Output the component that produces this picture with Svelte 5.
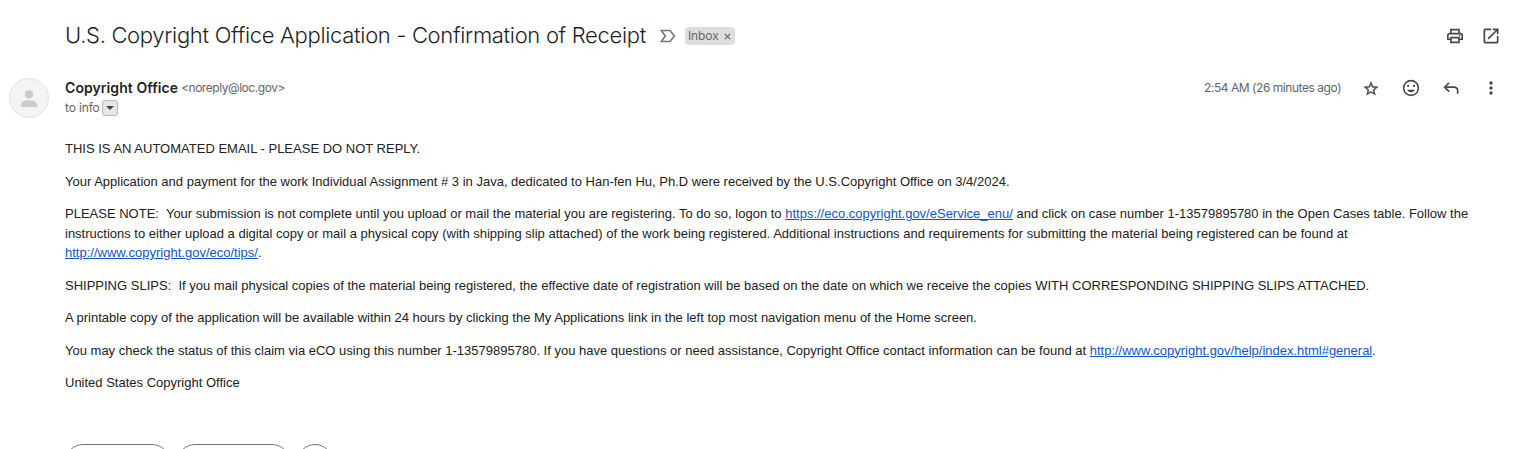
<script>
  const caseNumber = '1-13579895780';
</script>

<main class="message">
  <header class="subject">
    <h1>U.S. Copyright Office Application - Confirmation of Receipt</h1>
    <svg class="marker" viewBox="0 0 16 14" aria-hidden="true"><path d="M1.3 1.5H10L14.4 7 10 12.5H1.3L5.3 7Z" /></svg>
    <span class="label"><span class="label-name">Inbox</span><svg viewBox="0 0 8 8" aria-hidden="true"><path d="M1 1l6 6M7 1L1 7" /></svg></span>
    <div class="tools">
      <svg class="icon" viewBox="-0.5 -0.5 25 25"><path d="M19 8h-1V3H6v5H5c-1.660 0-3 1.340-3 3v6h4v4h12v-4h4v-6c0-1.660-1.340-3-3-3zM8 5h8v3H8V5zm8 12v2H8v-4h8v2zm2-2v-2H6v2H4v-4c0-.55.450-1 1-1h14c.55 0 1 .45 1 1v4h-2z" /><circle cx="18" cy="11.500" r="1" /></svg>
      <svg class="icon" viewBox="0 0 24 24"><path d="M19 19H5V5h7V3H5a2 2 0 0 0-2 2v14a2 2 0 0 0 2 2h14a2 2 0 0 0 2-2v-7h-2v7zM14 3v2h3.590l-9.830 9.830 1.410 1.410L19 6.410V10h2V3h-7z" /></svg>
    </div>
  </header>

  <section class="sender">
    <div class="avatar">
      <svg viewBox="0 0 16 18"><circle cx="8" cy="4.300" r="4.100" /><path d="M0 17v-2.500C0 11.700 4.500 10.300 8 10.300s8 1.400 8 4.200V17z" /></svg>
    </div>
    <div class="who">
      <div class="from"><strong>Copyright Office</strong><span class="address">&lt;noreply@loc.gov&gt;</span></div>
      <div class="to"><span>to info</span><i class="details"></i></div>
    </div>
    <span class="time">2:54 AM (26 minutes ago)</span>
    <div class="actions">
      <svg class="icon star" viewBox="-1.800 -2.800 27.600 27.600"><path d="M22 9.240l-7.190-.62L12 2 9.190 8.630 2 9.240l5.460 4.730L5.820 21 12 17.270 18.180 21l-1.630-7.030L22 9.240zM12 15.400l-3.760 2.270 1-4.280-3.320-2.880 4.380-.38L12 6.100l1.710 4.040 4.380.38-3.320 2.880 1 4.280L12 15.400z" /></svg>
      <svg class="icon" viewBox="0 0 24 24"><path d="M12 2.200a9.800 9.800 0 1 0 0 19.600 9.800 9.800 0 0 0 0-19.600zm0 17.700a7.900 7.900 0 1 1 0-15.800 7.900 7.900 0 0 1 0 15.800z" /><circle cx="8.500" cy="9.500" r="1.300" /><circle cx="15.500" cy="9.500" r="1.300" /><path d="M7.400 14h9.200c-.7 1.900-2.500 3-4.600 3S8.100 15.900 7.400 14z" /></svg>
      <svg class="icon" viewBox="0 -960 960 960"><path d="M760-200v-160q0-50-35-85t-85-35H273l144 144-57 56-240-240 240-240 57 56-144 144h367q83 0 141.500 58.500T840-360v160h-80Z" /></svg>
      <svg class="icon" viewBox="0 0 24 24"><circle cx="12" cy="6" r="2" /><circle cx="12" cy="12" r="2" /><circle cx="12" cy="18" r="2" /></svg>
    </div>
  </section>

  <article>
    <p>THIS IS AN AUTOMATED EMAIL - PLEASE DO NOT REPLY.</p>
    <p>Your Application and payment for the work Individual Assignment # 3 in Java, dedicated to Han-fen Hu, Ph.D were received by the U.S.Copyright Office on 3/4/2024.</p>
    <p>PLEASE NOTE:&nbsp; Your submission is not complete until you upload or mail the material you are registering. To do so, logon to <a href="https://eco.copyright.gov/eService_enu/">https://eco.copyright.gov/eService_enu/</a> and click on case number {caseNumber} in the Open Cases table. Follow the instructions to either upload a digital copy or mail a physical copy (with shipping slip attached) of the work being registered. Additional instructions and requirements for submitting the material being registered can be found at <a href="http://www.copyright.gov/eco/tips/">http://www.copyright.gov/eco/tips/</a>.</p>
    <p>SHIPPING SLIPS:&nbsp; If you mail physical copies of the material being registered, the effective date of registration will be based on the date on which we receive the copies WITH CORRESPONDING SHIPPING SLIPS ATTACHED.</p>
    <p>A printable copy of the application will be available within 24 hours by clicking the My Applications link in the left top most navigation menu of the Home screen.</p>
    <p>You may check the status of this claim via eCO using this number {caseNumber}. If you have questions or need assistance, Copyright Office contact information can be found at <a href="http://www.copyright.gov/help/index.html#general">http://www.copyright.gov/help/index.html#general</a>.</p>
    <p>United States Copyright Office</p>
  </article>

  <footer>
    <span class="pill reply"></span>
    <span class="pill forward"></span>
    <span class="pill react"></span>
  </footer>
</main>

<style>
  :global(body) { margin: 0; background: #fff; overflow: hidden; }
  .message {
    box-sizing: border-box;
    width: 1525px;
    height: 449px;
    overflow: hidden;
    display: flex;
    flex-direction: column;
    background: #fff;
    font-family: Inter, "Liberation Sans", sans-serif;
  }
  .subject {
    flex: none;
    height: 72px;
    padding: 0 24px 0 65px;
    display: flex;
    align-items: center;
  }
  h1 {
    margin: 0 0 2px;
    width: 595px;
    font-size: 22px;
    line-height: 28px;
    font-weight: 300;
    letter-spacing: -0.31px;
    color: #1f1f1f;
    white-space: nowrap;
  }
  .marker { width: 16px; height: 14px; fill: none; stroke: #757575; stroke-width: 1.6; }
  .label {
    box-sizing: border-box;
    display: flex;
    align-items: center;
    width: 50px;
    height: 18px;
    margin-left: 9px;
    padding-left: 3px;
    border-radius: 4px;
    background: #ddd;
    color: #666;
    font-size: 12px;
    line-height: 16px;
  }
  .label-name { width: 36px; letter-spacing: -0.1px; }
  .label svg { width: 7px; height: 7px; margin-top: 1px; fill: none; stroke: #666; stroke-width: 1.4; }
  .tools { margin-left: auto; display: flex; gap: 16px; }
  .icon { display: block; width: 20px; height: 20px; fill: #444746; }
  .star { stroke: #444746; stroke-width: 0.4; }
  .sender {
    flex: none;
    height: 67px;
    padding: 0 24px 0 9px;
    display: flex;
    align-items: flex-start;
  }
  .avatar {
    box-sizing: border-box;
    width: 40px;
    height: 40px;
    margin-top: 6px;
    border: 1px solid #e2e2e2;
    border-radius: 50%;
    background: #f4f4f4;
    display: flex;
    align-items: center;
    justify-content: center;
  }
  .avatar svg { width: 16px; height: 18px; fill: #ccc; margin-top: 1px; }
  .who { margin: 6px 0 0 16px; }
  .from { display: flex; height: 20px; line-height: 20px; white-space: nowrap; }
  strong { width: 116px; font-size: 14px; font-weight: 600; color: #1f1f1f; letter-spacing: 0.07px; }
  .address { font-size: 12px; color: #666; letter-spacing: -0.45px; }
  .to { display: flex; align-items: center; height: 20px; font-size: 12px; line-height: 20px; color: #666; }
  .to span { width: 37px; letter-spacing: -0.15px; white-space: nowrap; }
  .details {
    box-sizing: border-box;
    width: 16px;
    height: 16px;
    border: 1px solid #bbb;
    border-radius: 3px;
    background: #e6e6e6;
    display: flex;
    align-items: center;
    justify-content: center;
  }
  .details::before { content: ""; border: 4px solid transparent; border-top-color: #444; border-bottom: 0; }
  .time { margin: 6px 0 0 auto; width: 157px; font-size: 12px; line-height: 20px; color: #666; letter-spacing: -0.45px; white-space: nowrap; }
  .actions { display: flex; gap: 20px; margin-top: 6px; }
  article {
    flex: none;
    height: 305px;
    padding: 0 50px 0 65px;
    font: 13px/19.5px "Liberation Sans", Arial, sans-serif;
    color: #222;
  }
  p { margin: 0 0 13px; }
  a { color: #15c; }
  footer { flex: none; display: flex; padding-left: 65px; }
  .pill { box-sizing: border-box; height: 36px; border: 1px solid #747775; border-radius: 18px; }
  .reply { width: 105px; }
  .forward { width: 113px; margin-left: 7px; }
  .react { width: 36px; margin-left: 7px; }
</style>
